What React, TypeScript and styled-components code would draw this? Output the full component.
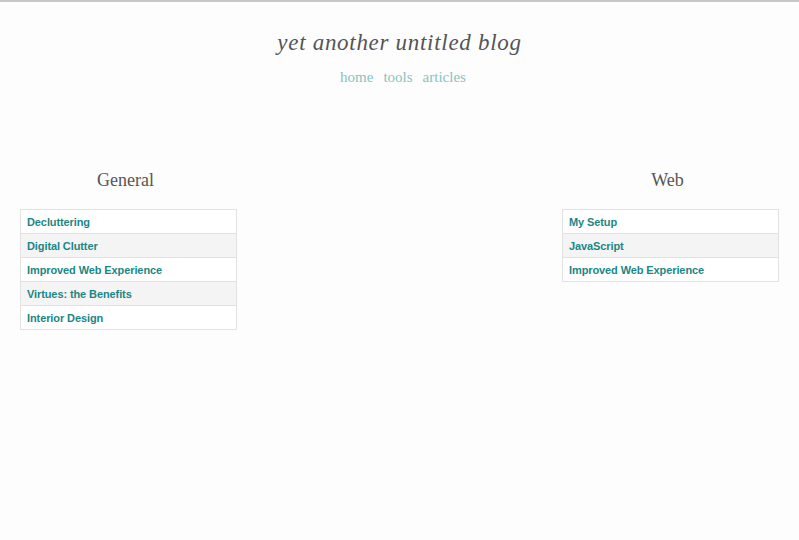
import React from "react";
import styled, { createGlobalStyle } from "styled-components";

const Global = createGlobalStyle`
  html, body { margin: 0; padding: 0; background: #fdfdfd; }
  body { border-top: 2px solid #c8c8c8; }
  * { box-sizing: border-box; }
`;

const Header = styled.header`
  display: flex;
  flex-direction: column;
  align-items: center;
  padding-top: 28px;
`;

const Title = styled.h1`
  margin: 0;
  font-family: "Liberation Serif", "Times New Roman", serif;
  font-style: italic;
  font-weight: normal;
  font-size: 23px;
  letter-spacing: 0.7px;
  color: #555;
  line-height: 26px;
`;

const Nav = styled.nav`
  display: flex;
  gap: 10px;
  margin-top: 12px;
  padding-left: 7px;
`;

const NavLink = styled.a`
  font-family: "Liberation Serif", "Times New Roman", serif;
  font-size: 15px;
  color: #86c3c3;
  text-decoration: none;
  line-height: 18px;
`;

const Columns = styled.main`
  display: flex;
  justify-content: space-between;
  padding: 0 20px;
  margin-top: 83px;
`;

const Column = styled.section`
  width: 217px;
  display: flex;
  flex-direction: column;
`;

const Heading = styled.h2`
  margin: 0 0 18px;
  padding-right: 6px;
  text-align: center;
  font-family: "Liberation Serif", "Times New Roman", serif;
  font-weight: normal;
  font-size: 18px;
  line-height: 22px;
  color: #555;
`;

const List = styled.ul`
  list-style: none;
  margin: 0;
  padding: 0;
  border: 1px solid #e2e2e2;
`;

const Item = styled.li<{ $alt: boolean }>`
  height: 24px;
  display: flex;
  align-items: center;
  padding: 0 6px;
  background: ${(p) => (p.$alt ? "#f4f4f4" : "#ffffff")};
  border-top: 1px solid #e2e2e2;
  &:first-child { border-top: none; height: 23px; }
`;

const ItemLink = styled.a`
  font-family: "Liberation Sans", Arial, sans-serif;
  font-weight: bold;
  font-size: 11px;
  letter-spacing: -0.1px;
  color: #1b8686;
  text-decoration: none;
`;

const groups = [
  {
    name: "General",
    items: ["Decluttering", "Digital Clutter", "Improved Web Experience", "Virtues: the Benefits", "Interior Design"],
  },
  { name: "Web", items: ["My Setup", "JavaScript", "Improved Web Experience"] },
];

export default function App() {
  return (
    <>
      <Global />
      <Header>
        <Title>yet another untitled blog</Title>
        <Nav>
          <NavLink href="#">home</NavLink>
          <NavLink href="#">tools</NavLink>
          <NavLink href="#">articles</NavLink>
        </Nav>
      </Header>
      <Columns>
        {groups.map((g) => (
          <Column key={g.name}>
            <Heading>{g.name}</Heading>
            <List>
              {g.items.map((it, i) => (
                <Item key={it + i} $alt={i % 2 === 1}>
                  <ItemLink href="#">{it}</ItemLink>
                </Item>
              ))}
            </List>
          </Column>
        ))}
      </Columns>
    </>
  );
}
